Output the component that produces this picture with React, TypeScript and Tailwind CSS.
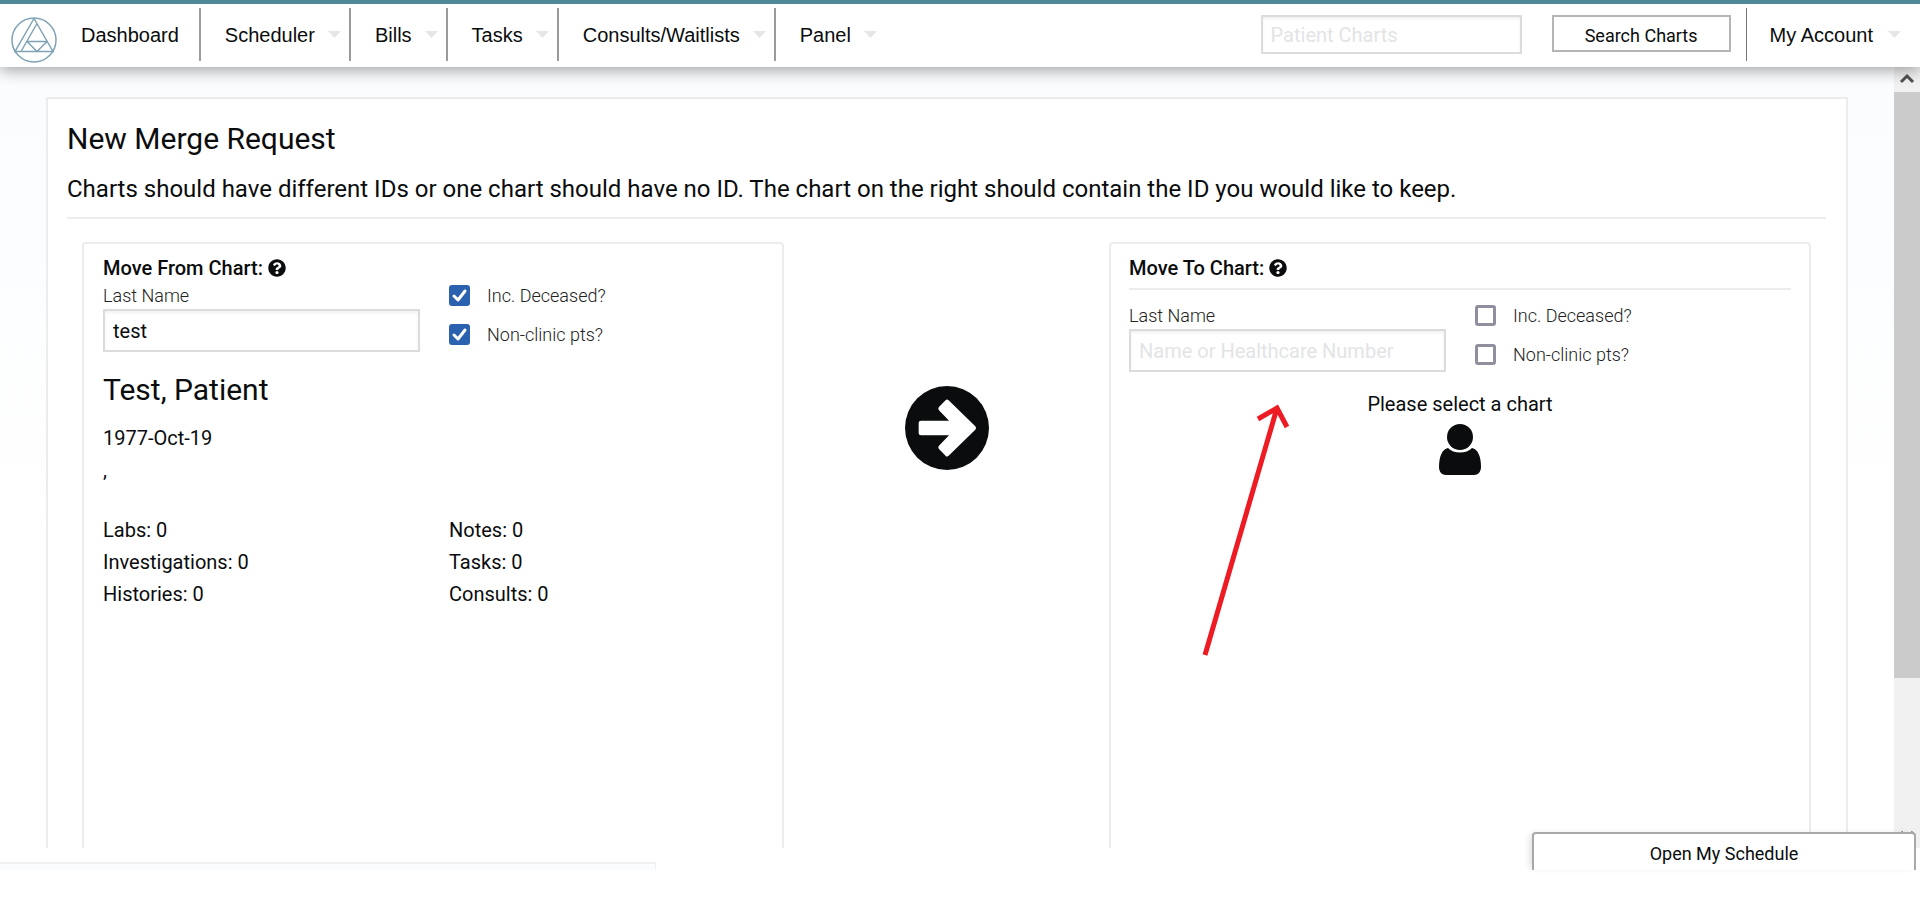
import { FaQuestionCircle } from "react-icons/fa";

type MenuItem = { label: string; hasMenu?: boolean };

const menuItems: MenuItem[] = [
  { label: "Dashboard" },
  { label: "Scheduler", hasMenu: true },
  { label: "Bills", hasMenu: true },
  { label: "Tasks", hasMenu: true },
  { label: "Consults/Waitlists", hasMenu: true },
  { label: "Panel", hasMenu: true },
];

const counts = [
  { label: "Labs", value: 0 },
  { label: "Notes", value: 0 },
  { label: "Investigations", value: 0 },
  { label: "Tasks", value: 0 },
  { label: "Histories", value: 0 },
  { label: "Consults", value: 0 },
];

function Logo() {
  return (
    <svg
      viewBox="0 0 46 46"
      className="w-[46px] h-[46px] shrink-0"
      fill="none"
      stroke="#7fa3b5"
      strokeWidth="1.5"
    >
      <circle cx="23" cy="23" r="22" />
      <path d="M23 1.500L4 34.500H42L23 1.500M26 6.500L10 34.500M16 24.500H36M16 24.500L26 34.500L36 24.500" />
    </svg>
  );
}

function Caret() {
  return (
    <svg viewBox="0 0 13 7" className="w-[13px] h-[7px]" fill="#e6e6e6">
      <path d="M0 0H13L6.500 7Z" />
    </svg>
  );
}

function ArrowIcon() {
  return (
    <svg viewBox="0 0 252 252" className="mt-36 w-[84px] h-[84px] shrink-0">
      <circle cx="126" cy="126" r="126" fill="#0a0c0d" />
      <path
        d="M48 111H148L107 68L126 48L206 126L126 204L107 184L148 141H48Z"
        fill="white"
        stroke="white"
        strokeWidth="14"
        strokeLinejoin="round"
      />
    </svg>
  );
}

function UserIcon() {
  return (
    <svg viewBox="0 0 42 51" className="mt-1 w-[42px] h-[51px]" fill="#0a0c0d">
      <ellipse cx="21" cy="13" rx="13" ry="13" />
      <path d="M9 24C3 25 0 33 0 43C0 48 3 51 7 51H35C39 51 42 48 42 43C42 33 39 25 33 24C30 27 26 28.500 21 28.500C16 28.500 12 27 9 24Z" />
    </svg>
  );
}

function Checkbox({ id, label, checked }: { id: string; label: string; checked?: boolean }) {
  return (
    <div className="flex items-center gap-[17px] h-[39px]">
      <span className="relative w-[21px] h-[21px]">
        <input
          id={id}
          type="checkbox"
          defaultChecked={checked}
          className="peer block appearance-none w-[21px] h-[21px] rounded-[3px] border-[3px] border-[#8f8f9d] bg-white checked:border-[#2b62b0] checked:bg-[#2b62b0]"
        />
        <svg
          viewBox="0 0 21 21"
          className="absolute inset-0 hidden peer-checked:block pointer-events-none"
          fill="none"
          stroke="white"
          strokeWidth="3"
          strokeLinecap="round"
          strokeLinejoin="round"
        >
          <path d="M5 11L9 15L16 6" />
        </svg>
      </span>
      <label htmlFor={id} className="text-lg font-light text-[#222]">
        {label}
      </label>
    </div>
  );
}

type SearchProps = { id: string; value?: string; checked?: boolean };

function ChartSearch({ id, value, checked }: SearchProps) {
  return (
    <div className="grid grid-cols-[346px_1fr]">
      <div>
        <label htmlFor={`${id}-name`} className="block text-lg leading-6 font-light text-[#222]">
          Last Name
        </label>
        <input
          id={`${id}-name`}
          type="text"
          defaultValue={value}
          placeholder="Name or Healthcare Number"
          className="mt-px w-[317px] h-[43px] border-2 border-[#dcdcdc] px-2 text-xl shadow-[inset_0_2px_3px_#0000000f] placeholder:text-[#e2e4e6]"
        />
      </div>
      <div className="-mt-2">
        <Checkbox id={`${id}-deceased`} label="Inc. Deceased?" checked={checked} />
        <Checkbox id={`${id}-clinic`} label="Non-clinic pts?" checked={checked} />
      </div>
    </div>
  );
}

function Header() {
  return (
    <header className="relative z-10 flex items-center h-[67px] pb-0.5 shrink-0 border-t-4 border-[#4f8896] bg-white shadow-[0_4px_14px_#00000055]">
      <div className="pl-[11px] pt-2.5">
        <Logo />
      </div>
      <nav className="flex items-center h-[53px] text-xl font-['Liberation_Sans',Arial,sans-serif]">
        {menuItems.map(({ label, hasMenu }) => (
          <a
            key={label}
            href="#"
            className={`flex items-center gap-[13px] h-full pl-6 border-[#9a9a9a] not-last:border-r-2 ${
              hasMenu ? "pr-2" : "pr-5"
            }`}
          >
            {label}
            {hasMenu && <Caret />}
          </a>
        ))}
      </nav>

      <div className="flex items-center h-[53px] ml-auto">
        <input
          type="text"
          aria-label="Patient Charts"
          placeholder="Patient Charts"
          className="w-[261px] h-[39px] border-2 border-[#dcdcdc] px-2 text-xl shadow-[inset_0_2px_3px_#0000000f] placeholder:text-[#e2e4e6]"
        />
        <button className="self-start mt-[7px] ml-[30px] w-[179px] h-[37px] pt-1 border-2 border-[#b5b5b5] text-lg">
          Search Charts
        </button>
        <a
          href="#"
          className="flex items-center gap-[15px] h-full ml-[15px] pl-[23px] pr-[19px] text-xl border-l border-[#777] font-['Liberation_Sans',Arial,sans-serif]"
        >
          My Account
          <Caret />
        </a>
      </div>
    </header>
  );
}

function ScrollTrack() {
  return (
    <div className="flex flex-col items-center w-[26px] shrink-0 bg-[#f1f1f1]">
      <svg viewBox="0 0 26 25" className="w-[26px] h-[25px] shrink-0" fill="none" stroke="#505050" strokeWidth="3">
        <path d="M7 15L13 9L19 15" />
      </svg>
      <div className="w-full h-3/4 bg-[#cbcbcb]" />
      <svg viewBox="0 0 26 25" className="w-[26px] h-[25px] mt-auto shrink-0" fill="none" stroke="#505050" strokeWidth="3">
        <path d="M7 9L13 15L19 9" />
      </svg>
    </div>
  );
}

export default function App() {
  return (
    <div className="h-screen flex flex-col bg-white text-[#0a0c0d] font-['Roboto',sans-serif]">
      <Header />

      <div className="flex flex-1 min-h-0">
        <main className="flex flex-1 min-w-0 overflow-hidden px-[46px] pt-[30px] bg-linear-to-b from-[#fafcfe] to-white to-60%">
          <section className="flex flex-col flex-1 border-2 border-b-0 border-[#ececec] bg-white pl-[19px] pr-5">
            <h1 className="mt-5 text-3xl leading-10">New Merge Request</h1>
            <p className="mt-3 text-2xl leading-9">
              Charts should have different IDs or one chart should have no ID. The chart on the right
              should contain the ID you would like to keep.
            </p>
            <hr className="mt-2.5 border-t-2 border-[#ececec]" />

            <div className="flex flex-1 justify-between mt-[23px] px-[15px]">
              {/* Move from */}
              <div className="w-[702px] rounded-t border-2 border-b-0 border-[#ececec] px-[19px] pt-2.5">
                <h2 className="flex items-center gap-[5px] mb-0.5 text-xl leading-7 font-medium">
                  Move From Chart: <FaQuestionCircle className="w-[18px] h-[18px]" />
                </h2>
                <ChartSearch id="from" value="test" checked />

                <h3 className="mt-4 text-3xl leading-10">Test, Patient</h3>
                <p className="mt-3 text-xl leading-8">1977-Oct-19</p>
                <p className="text-xl leading-8">,</p>
                <ul className="grid grid-cols-[346px_1fr] mt-7 text-xl leading-8">
                  {counts.map(({ label, value }) => (
                    <li key={label}>
                      {label}: {value}
                    </li>
                  ))}
                </ul>
              </div>

              <ArrowIcon />

              {/* Move to */}
              <div className="relative w-[702px] rounded-t border-2 border-b-0 border-[#ececec] px-[18px] pt-2.5">
                <h2 className="flex items-center gap-[5px] text-xl leading-7 font-medium">
                  Move To Chart: <FaQuestionCircle className="w-[18px] h-[18px]" />
                </h2>
                <hr className="mt-1.5 mb-3.5 border-t-2 border-[#ececec]" />
                <ChartSearch id="to" />

                <div className="flex flex-col items-center mt-3.5 text-xl leading-8">
                  Please select a chart
                  <UserIcon />
                </div>

                <svg
                  viewBox="0 0 90 252"
                  className="absolute left-[91px] top-[160px] w-[90px] h-[252px]"
                  fill="none"
                  stroke="#ed1c24"
                  strokeWidth="5"
                >
                  <path d="M3 251L75 4M56 15L75 4L85 23" />
                </svg>
              </div>
            </div>
          </section>
        </main>
        <ScrollTrack />
      </div>

      <footer className="relative z-10 h-14 shrink-0 pt-3.5">
        <div className="w-[656px] h-2 border-t-2 border-r border-[#eef0f2] bg-[#fafcfe]" />
        <button className="absolute right-1 -top-4 w-[384px] h-[38px] pt-1 rounded-t-sm border-2 border-b-0 border-[#a8a8a8] bg-white text-lg shadow-[-4px_0_6px_-2px_#00000022]">
          Open My Schedule
        </button>
      </footer>
    </div>
  );
}
